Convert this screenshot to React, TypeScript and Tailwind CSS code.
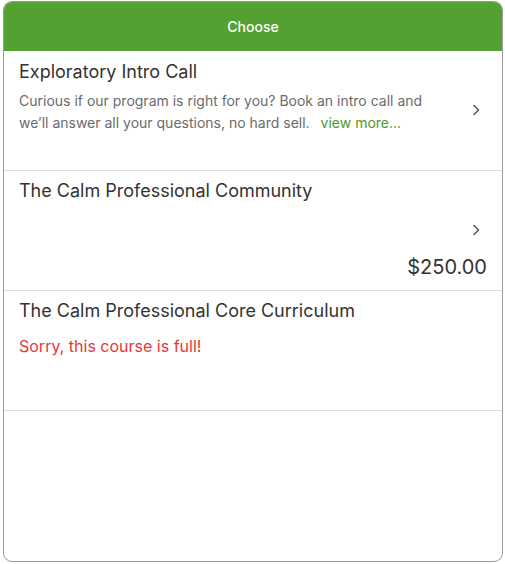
const font = { fontFamily: 'Inter, "Noto Sans", sans-serif' }

function Chevron() {
  return (
    <svg width="10" height="14" viewBox="0 0 10 14" fill="none" className="shrink-0">
      <path d="M3 2.5 L7.5 7 L3 11.5" stroke="#555" strokeWidth="1.5" strokeLinecap="round" strokeLinejoin="round" />
    </svg>
  )
}

export default function App() {
  return (
    <div className="bg-white pt-[1px] pl-[3px]" style={font}>
      <div className="flex h-[561px] w-[500px] flex-col overflow-hidden rounded-[9px] border border-[#9b9b9b] bg-white">
        <div className="flex h-[49px] shrink-0 items-center justify-center bg-[#53a231] text-[14px] font-medium text-white">
          Choose
        </div>

        {/* intro call */}
        <div className="h-[120px] shrink-0 border-b border-[#dcdcdc] pl-[15px] pr-[21px] pt-[9px]">
          <div className="text-[18px] leading-[24px] text-[#333]">Exploratory Intro Call</div>
          <div className="mt-[6px] flex items-center justify-between">
            <p className="w-[426px] text-[14px] leading-[22px] text-[#6b6b6b]">
              Curious if our program is right for you? Book an intro call and we’ll answer all your questions, no hard sell.
              <span className="pl-[11px] text-[#4b9a2a]">view more...</span>
            </p>
            <div className="-mt-[4px]">
              <Chevron />
            </div>
          </div>
        </div>

        {/* community */}
        <div className="h-[120px] shrink-0 border-b border-[#dcdcdc] pl-[15px] pr-[15px] pt-[8px]">
          <div className="text-[18px] leading-[24px] text-[#333]">The Calm Professional Community</div>
          <div className="mt-[20px] flex justify-end pr-[6px]">
            <Chevron />
          </div>
          <div className="mt-[17px] text-right text-[20px] leading-[26px] text-[#333]">$250.00</div>
        </div>

        {/* core curriculum */}
        <div className="h-[120px] shrink-0 border-b border-[#dcdcdc] pl-[15px] pr-[19px] pt-[8px]">
          <div className="text-[18px] leading-[24px] text-[#333]">The Calm Professional Core Curriculum</div>
          <div className="mt-[12px] text-[16px] leading-[22px] text-[#e8353a]">Sorry, this course is full!</div>
        </div>
      </div>
    </div>
  )
}
